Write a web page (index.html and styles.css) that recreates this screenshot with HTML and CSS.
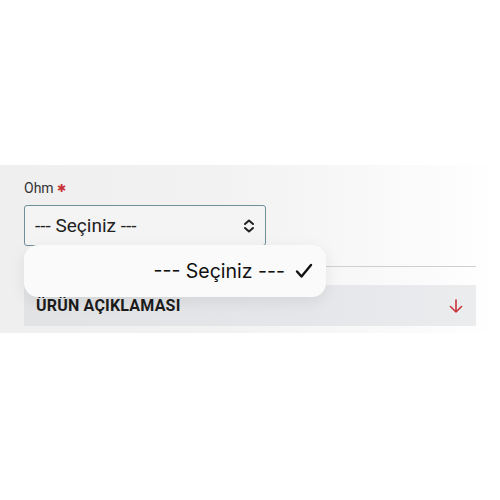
FILE: index.html
```html
<!DOCTYPE html>
<html lang="tr">
<head>
    <meta charset="UTF-8">
    <meta name="viewport" content="width=device-width, initial-scale=1.0">
    <title>Ürün Seçimi</title>
    <link rel="stylesheet" href="styles.css">
</head>
<body>
    <div class="panel">
        <label class="field-label">Ohm <span class="required">✱</span></label>
        <div class="select-wrap">
            <div class="select-box">
                <span>--- Seçiniz ---</span>
                <svg class="chevrons" width="14" height="16" viewBox="0 0 14 16">
                    <path d="M3 6 L7 2.5 L11 6 M3 10 L7 13.5 L11 10" fill="none" stroke="#222" stroke-width="2" stroke-linecap="round" stroke-linejoin="round"/>
                </svg>
            </div>
            <div class="divider"></div>
            <div class="popup">
                <span>--- Seçiniz ---</span>
                <svg width="18" height="16" viewBox="0 0 18 16">
                    <path d="M2 8.5 L6.5 13.5 L16 2" fill="none" stroke="#111" stroke-width="2.4" stroke-linecap="round" stroke-linejoin="round"/>
                </svg>
            </div>
        </div>
        <div class="accordion">
            <span>ÜRÜN AÇIKLAMASI</span>
            <svg width="14" height="16" viewBox="0 0 14 16">
                <path d="M7 2 L7 14 M1.5 8.5 L7 14 L12.5 8.5" fill="none" stroke="#c8353a" stroke-width="1.6" stroke-linecap="round" stroke-linejoin="round"/>
            </svg>
        </div>
    </div>
</body>
</html>
```

FILE: styles.css
```css
body {
    margin: 0;
    background: #fff;
    font-family: Roboto, 'Noto Sans', sans-serif;
    color: #222;
}

.panel {
    margin-top: 165px;
    height: 168px;
    box-sizing: border-box;
    padding: 15px 24px 0 24px;
    background: linear-gradient(90deg, #efefef 0%, #f2f2f2 45%, #fbfbfb 85%, #fff 100%);
}

.field-label {
    display: block;
    font-size: 14px;
    color: #333;
    height: 25px;
}

.required {
    color: #c8353a;
    font-size: 11px;
    vertical-align: 1px;
}

.select-wrap {
    position: relative;
    height: 80px;
}

.select-box {
    width: 242px;
    height: 41px;
    box-sizing: border-box;
    border: 1.5px solid #6f8f99;
    border-radius: 3px;
    display: flex;
    align-items: center;
    justify-content: space-between;
    padding: 0 9px 0 10px;
    font-size: 19px;
    color: #222;
    background: #f4f4f4;
}

.divider {
    margin-top: 20px;
    border-top: 1px solid #cfcfcf;
}

.popup {
    position: absolute;
    left: 0;
    top: 40px;
    width: 302px;
    height: 52px;
    box-sizing: border-box;
    background: #fafafa;
    border-radius: 14px;
    box-shadow: 0 4px 16px rgba(0, 0, 0, 0.08);
    display: flex;
    align-items: center;
    justify-content: flex-end;
    gap: 10px;
    padding-right: 13px;
    font-family: Inter, 'Noto Sans', sans-serif;
    font-size: 19.5px;
    color: #111;
}

.accordion {
    height: 41px;
    background: linear-gradient(90deg, #e2e3e5 0%, #e5e6e9 60%, #ebecee 100%);
    display: flex;
    align-items: center;
    justify-content: space-between;
    padding: 0 13px 0 12px;
    font-size: 16px;
    font-weight: bold;
    letter-spacing: 0.2px;
    color: #1c1c1c;
}
```
